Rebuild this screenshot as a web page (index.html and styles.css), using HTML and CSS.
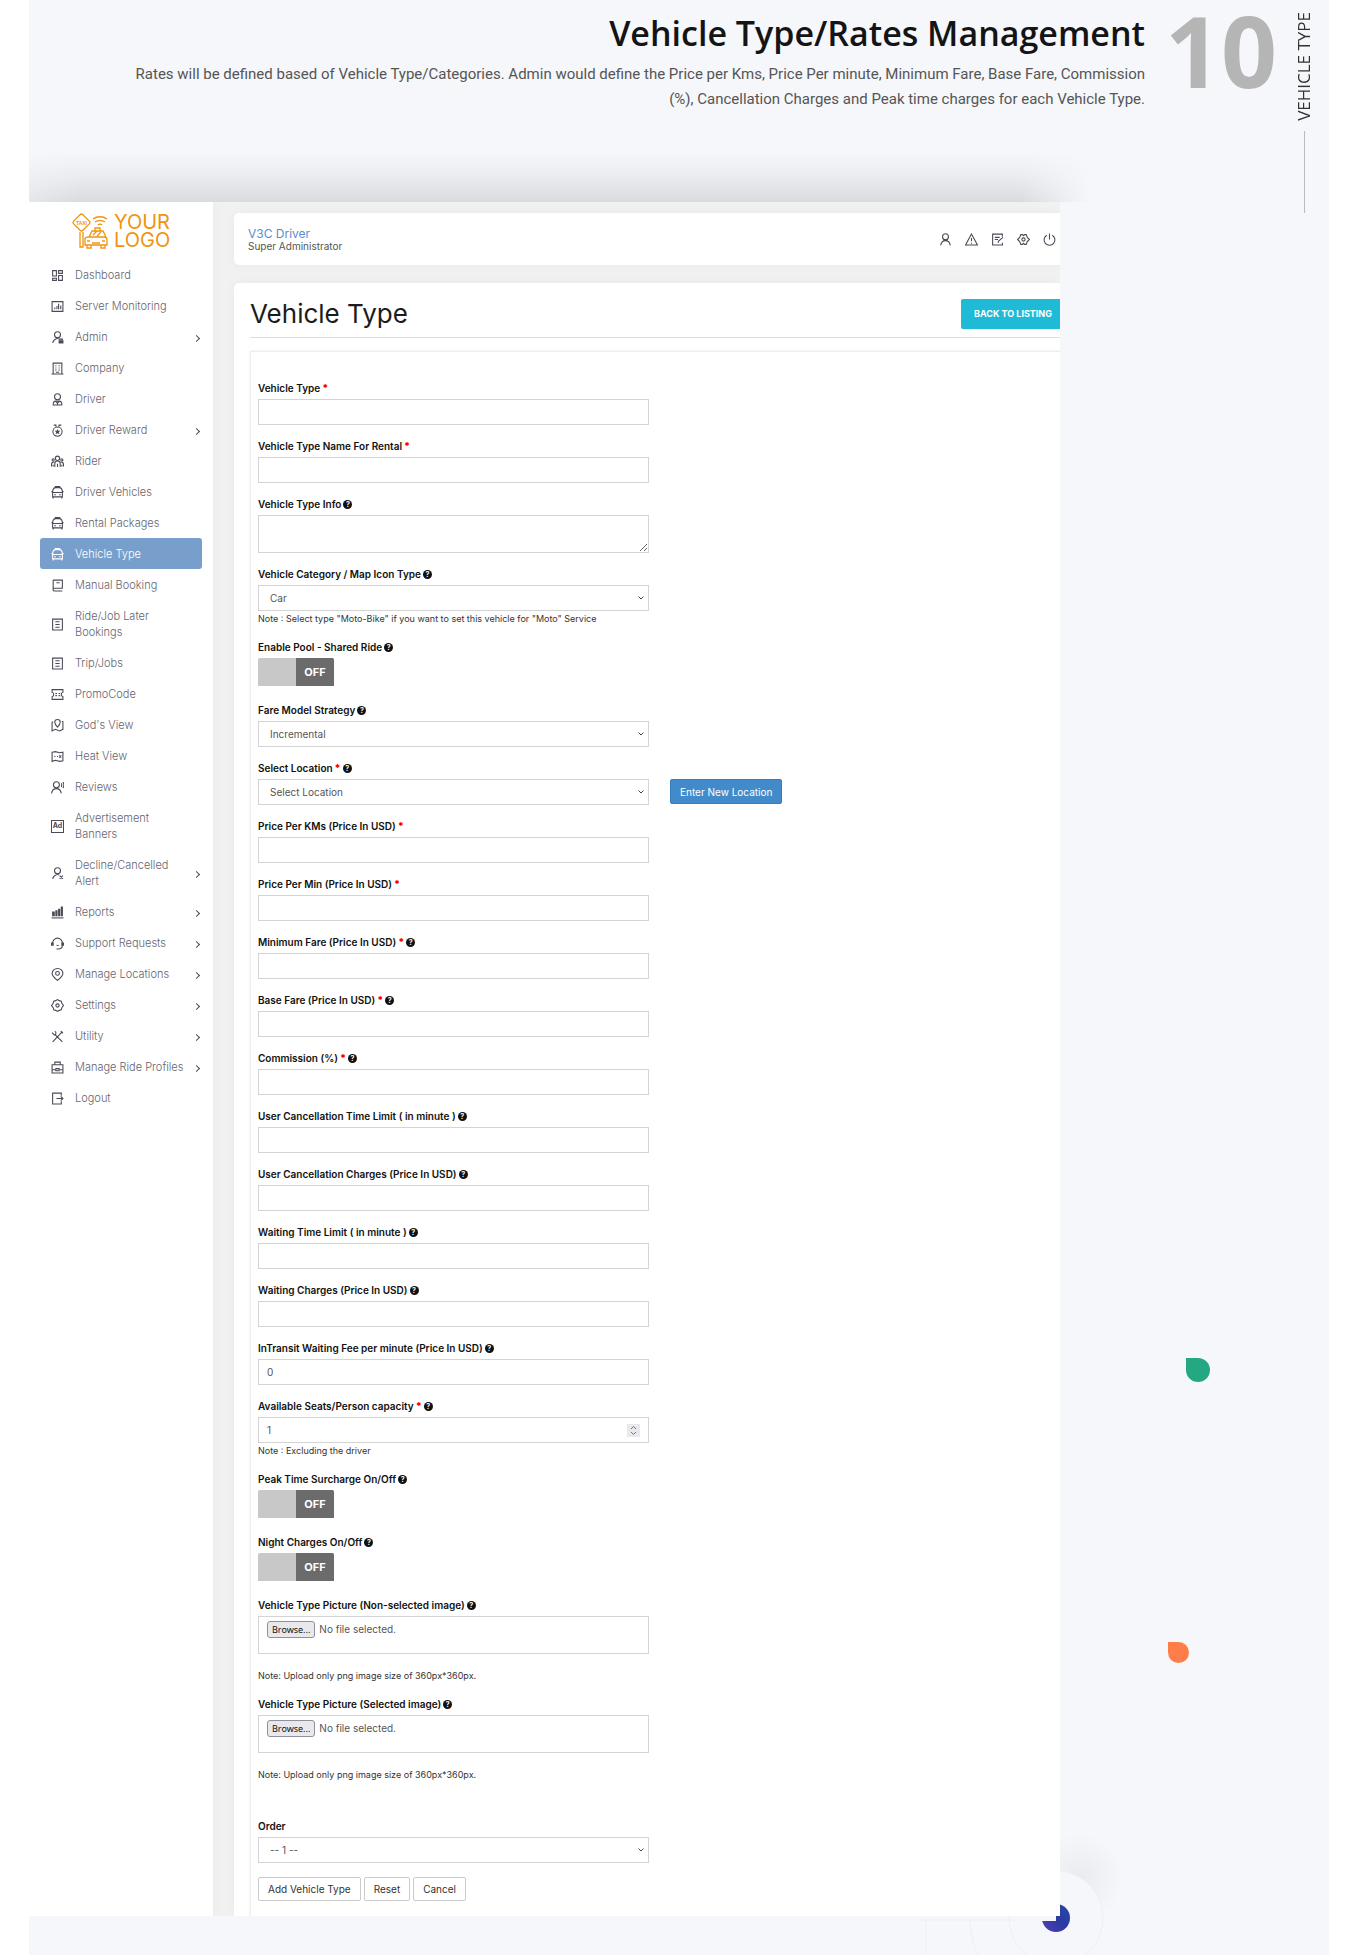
FILE: index.html
```html
<!DOCTYPE html>
<html lang="en">
<head>
<meta charset="utf-8">
<meta name="viewport" content="width=device-width, initial-scale=1">
<title>Vehicle Type/Rates Management</title>
<link rel="stylesheet" href="styles.css">
</head>
<body>
<svg class="sprite" aria-hidden="true">
  <symbol id="i-dash" viewBox="0 0 24 24"><path d="M3 3h7v10H3zM14 3h7v5h-7zM3 17h7v4H3zM14 12h7v9h-7z"/></symbol>
  <symbol id="i-monitor" viewBox="0 0 24 24"><path d="M2 3h20v18H2zM7 14v3M11 11v6M14 7v10M18 10v7"/></symbol>
  <symbol id="i-admin" viewBox="0 0 24 24"><circle cx="12" cy="7" r="5.500"/><path d="M3 22c1-4 4-7 8-8M9 12l6 3"/><path class="solid" d="M14 17h9v6h-9z"/><path d="M16 17v-2h5v2"/></symbol>
  <symbol id="i-company" viewBox="0 0 24 24"><path d="M4 2h16v20H4zM1 22h22M8 7h2M14 7h2M8 11h2M14 11h2M8 15h2M14 15h2M9 19h6"/></symbol>
  <symbol id="i-driver" viewBox="0 0 24 24"><circle cx="12" cy="7" r="5.500"/><path d="M4 22c0-5 3-7 5-7h6c2 0 5 2 5 7zM9 16l3 3 3-3M12 19v3"/></symbol>
  <symbol id="i-reward" viewBox="0 0 24 24"><circle cx="12" cy="14" r="8.500"/><path d="M5 2h5M14 2h5M8 2l2 3M16 2l-2 3"/><path class="solid" d="M12 9l1.500 3.500h3.500l-2.500 2.500 1 4-3.500-2-3.500 2 1-4L7 12.500h3.500z"/></symbol>
  <symbol id="i-rider" viewBox="0 0 24 24"><circle cx="12" cy="6" r="4"/><circle cx="4" cy="9" r="2"/><circle cx="20" cy="9" r="2"/><path d="M7 22v-6c0-3 2-5 5-5s5 2 5 5v6M12 16v6M1 21v-4c0-3 2-4 5-4M23 21v-4c0-3-2-4-5-4M4 18v3M20 18v3"/></symbol>
  <symbol id="i-taxi" viewBox="0 0 24 24"><path d="M8 3V1h8v2M3 12c0-6 2-9 6-9h6c4 0 6 3 6 9M1 10l2 2h18l2-2M3 12v8h18v-8M4 20v3M20 20v3M6 16h3M15 16h3"/></symbol>
  <symbol id="i-book" viewBox="0 0 24 24"><path d="M4 2h17v15H6c-3 0-3 5 0 5h15M4 2v18M10 7h6"/></symbol>
  <symbol id="i-list" viewBox="0 0 24 24"><path d="M3 2h18v20H3zM8 7h8M8 12h8M8 17h8"/></symbol>
  <symbol id="i-ticket" viewBox="0 0 24 24"><path d="M2 3h20v5c-4 1-4 7 0 8v5H2v-5c4-1 4-7 0-8zM8 10h3M14 10h3M8 14h3M14 14h3"/></symbol>
  <symbol id="i-pinmap" viewBox="0 0 24 24"><path d="M12 15C8 11 7 9 7 6a5 5 0 0 1 10 0c0 3-1 5-5 9zM4 5L2 6v16l6-3 8 3 6-3V5l-2-1"/></symbol>
  <symbol id="i-map" viewBox="0 0 24 24"><path d="M2 4l6-1 8 2 6-1v16l-6 1-8-2-6 2zM6 12h2M11 12h2M15 10l4 4M19 10l-4 4"/></symbol>
  <symbol id="i-review" viewBox="0 0 24 24"><circle cx="10" cy="7" r="5.500"/><path d="M1 23c1-6 4-9 9-9s8 3 9 9M19 4c1 2 1 5 0 7M22 2c2 3 2 8 0 11"/></symbol>
  <symbol id="i-decline" viewBox="0 0 24 24"><circle cx="12" cy="7" r="5.500"/><path d="M3 22c1-4 4-7 8-8M9 12l6 3M16 16l6 6M22 16l-6 6"/></symbol>
  <symbol id="i-report" viewBox="0 0 24 24"><path d="M1 22h22"/><path class="solid" d="M2 10h5v9H2zM8 8h4v11H8zM13 5h4v14h-4zM18 1h4v18h-4z"/></symbol>
  <symbol id="i-support" viewBox="0 0 24 24"><path d="M3 15v-4a9 9 0 0 1 18 0v4c0 4-3 7-8 7M1 11v4h3v-4zM20 11v4h3v-4zM10 15c2 1 3 1 4 0M10 22h4"/></symbol>
  <symbol id="i-pin" viewBox="0 0 24 24"><path d="M12 23C5 17 2 13 2 10a10 9 0 0 1 20 0c0 3-3 7-10 13z"/><circle cx="12" cy="10" r="3.500"/></symbol>
  <symbol id="i-gear" viewBox="0 0 24 24"><path d="M9 3l3-2 3 2 4 1 1 4 3 4-3 4-1 4-4 1-3 2-3-2-4-1-1-4-3-4 3-4 1-4z"/><circle cx="12" cy="12" r="3"/></symbol>
  <symbol id="i-tools" viewBox="0 0 24 24"><path d="M3 22L21 3M18 2l4 4M8 9l13 13M2 5l4 4c4 0 4-5 1-7"/></symbol>
  <symbol id="i-case" viewBox="0 0 24 24"><path d="M2 7h20v15H2zM7 7V2h10v5M2 16h7M15 16h7M9 14h6v4H9z"/></symbol>
  <symbol id="i-logout" viewBox="0 0 24 24"><path d="M19 7V2H3v20h16v-5M10 12h12M18 8l4 4-4 4"/></symbol>
  <symbol id="i-user" viewBox="0 0 24 24"><circle cx="12" cy="7" r="5.500"/><path d="M3 23c1-5 4-9 9-9s8 4 9 9M8 12l8 3M16 12l-8 3"/></symbol>
  <symbol id="i-warn" viewBox="0 0 24 24"><path d="M12 2L1 22h22zM12 9v6M12 18v2"/></symbol>
  <symbol id="i-note" viewBox="0 0 24 24"><path d="M21 7V2H3v20h18v-4M7 8h9M7 12h6M13 18l1-3 8-7"/></symbol>
  <symbol id="i-hex" viewBox="0 0 24 24"><path d="M7 3h3l2 2 2-2h3l2 5 4 4-4 4-2 5h-3l-2-2-2 2H7l-2-5-4-4 4-4z"/><circle cx="12" cy="12" r="3"/></symbol>
  <symbol id="i-power" viewBox="0 0 24 24"><path d="M12 1v11M7 4a10 10 0 1 0 10 0"/></symbol>
</svg>

<div class="canvas">
  <header class="hero">
    <div class="hero-text">
      <h1 class="hero-title">Vehicle Type/Rates Management</h1>
      <p class="hero-copy">Rates will be defined based of Vehicle Type/Categories. Admin would define the Price per Kms, Price Per minute, Minimum Fare, Base Fare, Commission (%), Cancellation Charges and Peak time charges for each Vehicle Type.</p>
    </div>
    <div class="hero-number">10</div>
    <div class="hero-side"><span class="hero-tag">VEHICLE TYPE</span><span class="hero-line"></span></div>
  </header>

  <div class="stage">
    <div class="panel">
      <aside class="sidebar">
        <a class="logo" href="#">
          <svg class="logo-mark" viewBox="0 0 36 36" aria-hidden="true">
            <rect x="3" y="3" width="13" height="13" rx="2" transform="rotate(45 9.500 9.500)"/>
            <text x="9.500" y="11.500">TAXI</text>
            <path d="M8 19v15h3V19M21 6c4-3 10-3 14 0M23 9c3-2 7-2 10 0M26 12c1-1 3-1 4 0"/>
            <path d="M17 24l3-6h11l3 6M13 26c0-2 2-2 4-2h15c2 0 3 1 3 3v5H13zM15 32v3h4v-3M29 32v3h4v-3M20 30h8M15 28h3M30 28h3M23 18v-3h5v3M21 22l4-4M25 23l4-4"/>
          </svg>
          <span class="logo-text">YOUR<br>LOGO</span>
        </a>
        <nav class="menu">
          <a class="item" href="#"><svg class="ico"><use href="#i-dash"/></svg><span>Dashboard</span></a>
          <a class="item" href="#"><svg class="ico"><use href="#i-monitor"/></svg><span>Server Monitoring</span></a>
          <a class="item more" href="#"><svg class="ico"><use href="#i-admin"/></svg><span>Admin</span></a>
          <a class="item" href="#"><svg class="ico"><use href="#i-company"/></svg><span>Company</span></a>
          <a class="item" href="#"><svg class="ico"><use href="#i-driver"/></svg><span>Driver</span></a>
          <a class="item more" href="#"><svg class="ico"><use href="#i-reward"/></svg><span>Driver Reward</span></a>
          <a class="item" href="#"><svg class="ico"><use href="#i-rider"/></svg><span>Rider</span></a>
          <a class="item" href="#"><svg class="ico"><use href="#i-taxi"/></svg><span>Driver Vehicles</span></a>
          <a class="item" href="#"><svg class="ico"><use href="#i-taxi"/></svg><span>Rental Packages</span></a>
          <a class="item active" href="#"><svg class="ico"><use href="#i-taxi"/></svg><span>Vehicle Type</span></a>
          <a class="item" href="#"><svg class="ico"><use href="#i-book"/></svg><span>Manual Booking</span></a>
          <a class="item" href="#"><svg class="ico"><use href="#i-list"/></svg><span>Ride/Job Later<br>Bookings</span></a>
          <a class="item" href="#"><svg class="ico"><use href="#i-list"/></svg><span>Trip/Jobs</span></a>
          <a class="item" href="#"><svg class="ico"><use href="#i-ticket"/></svg><span>PromoCode</span></a>
          <a class="item" href="#"><svg class="ico"><use href="#i-pinmap"/></svg><span>God's View</span></a>
          <a class="item" href="#"><svg class="ico"><use href="#i-map"/></svg><span>Heat View</span></a>
          <a class="item" href="#"><svg class="ico"><use href="#i-review"/></svg><span>Reviews</span></a>
          <a class="item" href="#"><span class="ico ad">Ad</span><span>Advertisement<br>Banners</span></a>
          <a class="item more" href="#"><svg class="ico"><use href="#i-decline"/></svg><span>Decline/Cancelled<br>Alert</span></a>
          <a class="item more" href="#"><svg class="ico"><use href="#i-report"/></svg><span>Reports</span></a>
          <a class="item more" href="#"><svg class="ico"><use href="#i-support"/></svg><span>Support Requests</span></a>
          <a class="item more" href="#"><svg class="ico"><use href="#i-pin"/></svg><span>Manage Locations</span></a>
          <a class="item more" href="#"><svg class="ico"><use href="#i-gear"/></svg><span>Settings</span></a>
          <a class="item more" href="#"><svg class="ico"><use href="#i-tools"/></svg><span>Utility</span></a>
          <a class="item more" href="#"><svg class="ico"><use href="#i-case"/></svg><span>Manage Ride Profiles</span></a>
          <a class="item" href="#"><svg class="ico"><use href="#i-logout"/></svg><span>Logout</span></a>
        </nav>
      </aside>

      <main class="content">
        <div class="topbar">
          <div class="who"><div class="who-name">V3C Driver</div><div class="who-role">Super Administrator</div></div>
          <div class="tools">
            <a href="#" aria-label="Profile"><svg class="ico"><use href="#i-user"/></svg></a>
            <a href="#" aria-label="Alerts"><svg class="ico"><use href="#i-warn"/></svg></a>
            <a href="#" aria-label="Notes"><svg class="ico"><use href="#i-note"/></svg></a>
            <a href="#" aria-label="Settings"><svg class="ico"><use href="#i-hex"/></svg></a>
            <a href="#" aria-label="Log out"><svg class="ico"><use href="#i-power"/></svg></a>
          </div>
        </div>

        <section class="card">
          <div class="card-head">
            <h2 class="card-title">Vehicle Type</h2>
            <a class="back" href="#">BACK TO LISTING</a>
          </div>
          <form class="form">
            <div class="field"><label for="f1">Vehicle Type <b class="req">*</b></label><input class="box" id="f1" type="text"></div>
            <div class="field"><label for="f2">Vehicle Type Name For Rental <b class="req">*</b></label><input class="box" id="f2" type="text"></div>
            <div class="field"><label for="f3">Vehicle Type Info <span class="help">?</span></label><textarea class="box" id="f3"></textarea></div>
            <div class="field"><label for="f4">Vehicle Category / Map Icon Type <span class="help">?</span></label><select class="box" id="f4"><option>Car</option></select><p class="note">Note : Select type "Moto-Bike" if you want to set this vehicle for "Moto" Service</p></div>
            <div class="field switch-field"><label for="f5">Enable Pool - Shared Ride <span class="help">?</span></label><label class="switch"><input class="sr" id="f5" type="checkbox"><span class="knob">OFF</span></label></div>
            <div class="field"><label for="f6">Fare Model Strategy <span class="help">?</span></label><select class="box" id="f6"><option>Incremental</option></select></div>
            <div class="field-row">
              <div class="field"><label for="f7">Select Location <b class="req">*</b> <span class="help">?</span></label><select class="box" id="f7"><option>Select Location</option></select></div>
              <button class="new-location" type="button">Enter New Location</button>
            </div>
            <div class="field"><label for="f8">Price Per KMs (Price In USD) <b class="req">*</b></label><input class="box" id="f8" type="text"></div>
            <div class="field"><label for="f9">Price Per Min (Price In USD) <b class="req">*</b></label><input class="box" id="f9" type="text"></div>
            <div class="field"><label for="f10">Minimum Fare (Price In USD) <b class="req">*</b> <span class="help">?</span></label><input class="box" id="f10" type="text"></div>
            <div class="field"><label for="f11">Base Fare (Price In USD) <b class="req">*</b> <span class="help">?</span></label><input class="box" id="f11" type="text"></div>
            <div class="field"><label for="f12">Commission (%) <b class="req">*</b> <span class="help">?</span></label><input class="box" id="f12" type="text"></div>
            <div class="field"><label for="f13">User Cancellation Time Limit ( in minute ) <span class="help">?</span></label><input class="box" id="f13" type="text"></div>
            <div class="field"><label for="f14">User Cancellation Charges (Price In USD) <span class="help">?</span></label><input class="box" id="f14" type="text"></div>
            <div class="field"><label for="f15">Waiting Time Limit ( in minute ) <span class="help">?</span></label><input class="box" id="f15" type="text"></div>
            <div class="field"><label for="f16">Waiting Charges (Price In USD) <span class="help">?</span></label><input class="box" id="f16" type="text"></div>
            <div class="field"><label for="f17">InTransit Waiting Fee per minute (Price In USD) <span class="help">?</span></label><input class="box" id="f17" type="text" value="0"></div>
            <div class="field"><label for="f18">Available Seats/Person capacity <b class="req">*</b> <span class="help">?</span></label><input class="box" id="f18" type="number" value="1"><p class="note">Note : Excluding the driver</p></div>
            <div class="field switch-field"><label for="f19">Peak Time Surcharge On/Off <span class="help">?</span></label><label class="switch"><input class="sr" id="f19" type="checkbox"><span class="knob">OFF</span></label></div>
            <div class="field switch-field"><label for="f20">Night Charges On/Off <span class="help">?</span></label><label class="switch"><input class="sr" id="f20" type="checkbox"><span class="knob">OFF</span></label></div>
            <div class="field file-field"><label for="f21">Vehicle Type Picture (Non-selected image) <span class="help">?</span></label><label class="box file"><input class="sr" id="f21" type="file"><span class="browse">Browse...</span><span>No file selected.</span></label><p class="note">Note: Upload only png image size of 360px*360px.</p></div>
            <div class="field file-field"><label for="f22">Vehicle Type Picture (Selected image) <span class="help">?</span></label><label class="box file"><input class="sr" id="f22" type="file"><span class="browse">Browse...</span><span>No file selected.</span></label><p class="note">Note: Upload only png image size of 360px*360px.</p></div>
            <div class="field order-field"><label for="f23">Order</label><select class="box" id="f23"><option>-- 1 --</option></select></div>
            <div class="actions"><button class="btn" type="submit">Add Vehicle Type</button><button class="btn" type="reset">Reset</button><button class="btn" type="button">Cancel</button></div>
          </form>
        </section>
      </main>
    </div>
    <svg class="orb" viewBox="0 0 240 120" aria-hidden="true">
      <defs>
        <linearGradient id="orb-fill" x1="0" x2="1" y1="1" y2="0"><stop offset="0" stop-color="#5a3db5"/><stop offset=".5" stop-color="#2b3aa0"/><stop offset="1" stop-color="#2747a8"/></linearGradient>
        <radialGradient id="haze"><stop offset="0" stop-color="#e9ebee"/><stop offset="1" stop-color="#f5f7fa"/></radialGradient>
      </defs>
      <circle cx="160" cy="42" r="44" fill="url(#haze)"/>
      <circle cx="136" cy="83" r="47" fill="#f5f7fa" stroke="#eef0f4"/>
      <path d="M0 85h120M6 85v35M50 85c0 14 4 26 8 35" fill="none" stroke="#eef0f4"/>
      <circle cx="136" cy="83" r="14" fill="url(#orb-fill)"/>
      <path d="M100 60h36v26h-36z" fill="#f5f7fa"/>
    </svg>
  </div>
  <span class="drop drop-green"></span>
  <span class="drop drop-orange"></span>
</div>
</body>
</html>
```
FILE: styles.css
```css
* { box-sizing: border-box; }
body { margin: 0; background: #fff; color: #222; font-family: Inter, "Liberation Sans", sans-serif; }
h1, h2, p { margin: 0; }
a { color: inherit; text-decoration: none; }
.sprite { display: none; }
.sr { position: absolute; width: 1px; height: 1px; margin: 0; opacity: 0; }

.canvas { position: relative; margin: 0 30px 0 29px; overflow: hidden; background: #f5f7fa; }

.hero { display: flex; justify-content: flex-end; height: 202px; padding: 12px 13px 0 90px; font-family: "Open Sans", sans-serif; }
.hero-text { flex: 1; text-align: right; }
.hero-title { color: #141414; font-size: 34px; font-weight: 600; line-height: 42px; }
.hero-copy { margin-top: 8px; color: #555; font-family: Roboto, sans-serif; font-size: 15px; line-height: 25px; }
.hero-number { width: 114px; margin-left: 20px; color: #b5b5b5; font-size: 98px; font-weight: 700; line-height: 76px; }
.hero-side { display: flex; flex-direction: column; align-items: center; width: 24px; margin-left: 13px; }
.hero-tag { color: #333; font-size: 17px; font-weight: 500; line-height: 24px; white-space: nowrap; writing-mode: vertical-rl; transform: rotate(180deg); }
.hero-line { flex: none; width: 1px; height: 82px; margin-top: 10px; background: #b9bcc0; }

.stage { position: relative; padding: 0 269px 39px 0; }
.stage::before { content: ""; position: absolute; top: -50px; left: 0; right: 239px; height: 50px; background: linear-gradient(to top, rgba(0,0,0,.11), rgba(0,0,0,.05) 45%, transparent); mask-image: linear-gradient(to right, rgba(0,0,0,.6), #000 50px, #000 calc(100% - 70px), transparent); }
.panel { position: relative; z-index: 1; display: flex; overflow: hidden; background: #f1f1f1; }

.sidebar { flex: 0 0 184px; min-width: 0; padding: 10px 11px 0; background: #fff; box-shadow: 0 0 10px rgba(0,0,0,.04); }
.logo { display: flex; gap: 6px; height: 47px; padding-top: 1px; padding-left: 32px; color: #f09410; }
.logo-mark { flex: none; width: 36px; height: 36px; fill: none; stroke: #f09410; stroke-width: 1.3; }
.logo-mark text { fill: #f09410; stroke: none; font: 700 5px "Liberation Sans", sans-serif; text-anchor: middle; }
.logo-text { font-size: 20px; line-height: 18px; }
.menu { display: flex; flex-direction: column; }
.item { display: flex; align-items: center; min-height: 31px; padding: 8px 3px 7px 11px; border-radius: 3px; color: #66646f; font-size: 11px; font-weight: 300; line-height: 16px; white-space: nowrap; }
.item.active { background: #789fcb; color: #fff; }
.ico { flex: none; width: 13px; height: 13px; fill: none; stroke: #4c4957; stroke-width: 2; }
.item .ico { margin-right: 11px; }
.active .ico { stroke: #fff; }
.solid { fill: #4c4957; stroke: none; }
.ad { border: 1px solid #4c4957; color: #4c4957; font-size: 7px; font-weight: 700; line-height: 10px; text-align: center; }
.more::after { content: ""; flex: none; width: 4px; height: 4px; margin-top: 3px; margin-left: auto; border: solid #4c4957; border-width: 1px 1px 0 0; transform: rotate(45deg); }

.content { flex: 1; min-width: 0; padding: 11px 0 0 21px; }
.topbar { display: flex; justify-content: space-between; align-items: center; height: 52px; padding: 0 4px 0 14px; border-radius: 5px 0 0 5px; background: #fff; box-shadow: 0 0 12px rgba(0,0,0,.04); }
.who-name { color: #5c8dcb; font-size: 12px; line-height: 13px; }
.who-role { color: #555; font-size: 10px; line-height: 12px; }
.tools { display: flex; gap: 13px; }
.tools a { display: flex; }

.card { margin-top: 18px; padding: 16px 0 0 16px; border-radius: 5px 0 0 0; background: #fff; box-shadow: 0 0 12px rgba(0,0,0,.04); }
.card-head { display: flex; justify-content: space-between; align-items: center; height: 39px; padding-bottom: 8px; border-bottom: 1px solid #ddd; }
.card-title { color: #1c1c1c; font-size: 26px; font-weight: 400; line-height: 30px; }
.back { height: 30px; padding: 0 8px 0 13px; border-radius: 2px 0 0 2px; background: #1fbad6; color: #fff; font-size: 9px; font-weight: 700; line-height: 30px; }

.form { margin-top: 13px; padding: 28px 0 15px 7px; border: solid #eee; border-width: 1px 0 0 1px; box-shadow: 0 0 3px rgba(0,0,0,.08); }
.field { width: 391px; margin-bottom: 13px; }
.field > label:first-child { display: flex; align-items: center; gap: 2px; margin-bottom: 3px; color: #111; font-size: 10px; font-weight: 600; line-height: 16px; }
.req { color: #f00; }
.help { width: 9px; height: 9px; border-radius: 5px; background: #111; color: #fff; font-size: 7px; font-weight: 700; line-height: 9px; text-align: center; }
.box { display: block; width: 100%; height: 26px; padding: 0 8px; border: 1px solid #d4d4d4; border-radius: 0; outline: 0; background: #fff; color: #555; font: 400 10px/16px Inter, "Liberation Sans", sans-serif; }
textarea.box { height: 38px; resize: vertical; }
select.box { padding: 0 11px; appearance: none; background: #fff url("data:image/svg+xml,%3Csvg xmlns='http://www.w3.org/2000/svg' viewBox='0 0 6 4'%3E%3Cpath d='M.5.5L3 3 5.500.5' fill='none' stroke='%23444'/%3E%3C/svg%3E") no-repeat right 4px center / 6px 4px; }
input[type="number"] { appearance: textfield; background: #fff url("data:image/svg+xml,%3Csvg xmlns='http://www.w3.org/2000/svg' viewBox='0 0 13 13'%3E%3Cpath d='M0 0h13v13H0z' fill='%23e9e9ed'/%3E%3Cpath d='M4 5l2.500-2.500L9 5M4 8l2.500 2.500L9 8' fill='none' stroke='%23777'/%3E%3C/svg%3E") no-repeat right 8px center / 13px 13px; }
input[type="number"]::-webkit-inner-spin-button { display: none; }
.note { color: #333; font-size: 9px; line-height: 15px; }
.switch-field { margin-bottom: 16px; }
.switch { position: relative; display: flex; justify-content: flex-end; width: 76px; height: 28px; border-radius: 2px 2px 0 0; overflow: hidden; background: #c8c8c8; }
.knob { width: 38px; background: #6b6b6b; color: #fff; font-size: 11px; font-weight: 700; line-height: 28px; text-align: center; }
.field-row { display: flex; align-items: center; gap: 21px; }
.new-location { height: 25px; margin-top: 5px; padding: 0 9px; border: 1px solid #357ebd; border-radius: 2px; background: #428bca; color: #fff; font: 400 10px/20px Inter, "Liberation Sans", sans-serif; }
.file { position: relative; display: flex; align-items: flex-start; gap: 4px; height: 38px; padding-top: 4px; }
.browse { height: 17px; padding: 0 4px; border: 1px solid #8f8f9d; border-radius: 3px; background: #e9e9ed; color: #111; font: 9px/15px "Noto Sans", sans-serif; }
.file-field .note { margin-top: 14px; }
.order-field { margin-top: 36px; }
.actions { display: flex; gap: 3px; padding-top: 1px; }
.btn { height: 24px; padding: 0 9px; border: 1px solid #ccc; border-radius: 2px; background: #fff; color: #333; font: 400 10px/20px Inter, "Liberation Sans", sans-serif; }

.orb { position: absolute; right: 169px; bottom: 0; width: 240px; height: 120px; }
.drop { position: absolute; border-radius: 0 50% 50% 50%; }
.drop-green { top: 1358px; right: 119px; width: 24px; height: 24px; background: #24a783; }
.drop-orange { top: 1642px; right: 140px; width: 21px; height: 21px; background: #fd7d4b; }
```
